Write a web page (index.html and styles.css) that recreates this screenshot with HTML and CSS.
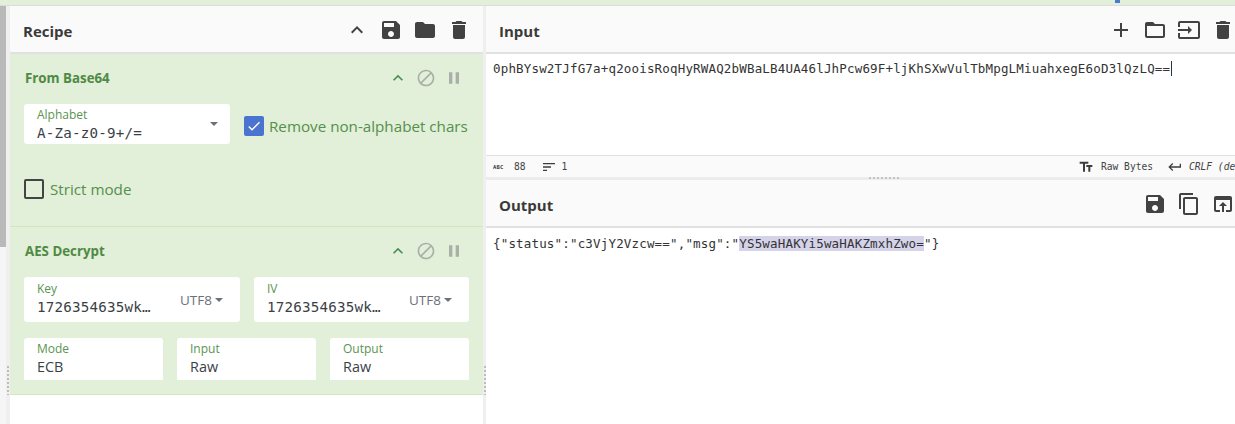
FILE: index.html
```html
<!DOCTYPE html>
<html lang="en">
<head>
<meta charset="utf-8">
<title>CyberChef</title>
<link rel="stylesheet" href="styles.css">
</head>
<body>
<div class="topstrip"><span class="topmark"></span></div>
<div class="workspace">
  <div class="rail"><div class="thumb"></div></div>
  <div class="gutter gutter-left"><span class="dots"></span></div>
  <section class="recipe">
    <header class="head">
      <h2>Recipe</h2>
      <div class="tools">
        <svg class="ic" viewBox="0 0 24 24"><path d="M12 8l-6 6 1.41 1.41L12 10.83l4.59 4.58L18 14z"/></svg>
        <svg class="ic" viewBox="0 0 24 24"><path d="M17 3H5c-1.11 0-2 .9-2 2v14c0 1.1.89 2 2 2h14c1.1 0 2-.9 2-2V7l-4-4zm-5 16c-1.66 0-3-1.34-3-3s1.34-3 3-3 3 1.34 3 3-1.34 3-3 3zm3-10H5V5h10v4z"/></svg>
        <svg class="ic" viewBox="0 0 24 24"><path d="M10 4H4c-1.1 0-1.99.9-1.99 2L2 18c0 1.1.9 2 2 2h16c1.1 0 2-.9 2-2V8c0-1.1-.9-2-2-2h-8l-2-2z"/></svg>
        <svg class="ic" viewBox="0 0 24 24"><path d="M6 19c0 1.1.9 2 2 2h8c1.1 0 2-.9 2-2V7H6v12zM19 4h-3.5l-1-1h-5l-1 1H5v2h14V4z"/></svg>
      </div>
    </header>

    <article class="op op-base">
      <div class="op-head">
        <h3>From Base64</h3>
        <div class="op-tools">
          <svg class="oc oc-up" viewBox="0 0 24 24"><path d="M12 8l-6 6 1.41 1.41L12 10.83l4.59 4.58L18 14z"/></svg>
          <svg class="oc" viewBox="0 0 24 24"><path d="M12 2C6.48 2 2 6.48 2 12s4.48 10 10 10 10-4.48 10-10S17.52 2 12 2zM4 12c0-4.42 3.58-8 8-8 1.85 0 3.55.63 4.9 1.69L5.69 16.9C4.63 15.55 4 13.85 4 12zm8 8c-1.85 0-3.55-.63-4.9-1.69L18.31 7.1C19.37 8.45 20 10.15 20 12c0 4.42-3.58 8-8 8z"/></svg>
          <svg class="oc" viewBox="0 0 24 24"><path d="M6 19h4V5H6v14zm8-14v14h4V5h-4z"/></svg>
        </div>
      </div>
      <div class="row row-alpha">
        <div class="field field-alpha">
          <label>Alphabet</label>
          <div class="val mono">A-Za-z0-9+/=</div>
          <span class="caret caret-alpha"></span>
        </div>
        <div class="check check-remove">
          <span class="box on"><svg viewBox="0 0 24 24"><path d="M9 16.17L4.83 12l-1.42 1.41L9 19 21 7l-1.41-1.41z"/></svg></span>
          <span class="check-label">Remove non-alphabet chars</span>
        </div>
      </div>
      <div class="check check-strict">
        <span class="box"></span>
        <span class="check-label">Strict mode</span>
      </div>
    </article>

    <article class="op op-aes">
      <div class="op-head">
        <h3>AES Decrypt</h3>
        <div class="op-tools">
          <svg class="oc oc-up" viewBox="0 0 24 24"><path d="M12 8l-6 6 1.41 1.41L12 10.83l4.59 4.58L18 14z"/></svg>
          <svg class="oc" viewBox="0 0 24 24"><path d="M12 2C6.48 2 2 6.48 2 12s4.48 10 10 10 10-4.48 10-10S17.52 2 12 2zM4 12c0-4.42 3.58-8 8-8 1.85 0 3.55.63 4.9 1.69L5.69 16.9C4.63 15.55 4 13.85 4 12zm8 8c-1.85 0-3.55-.63-4.9-1.69L18.31 7.1C19.37 8.45 20 10.15 20 12c0 4.42-3.58 8-8 8z"/></svg>
          <svg class="oc" viewBox="0 0 24 24"><path d="M6 19h4V5H6v14zm8-14v14h4V5h-4z"/></svg>
        </div>
      </div>
      <div class="row row-two">
        <div class="field field-key">
          <div class="key-main"><label>Key</label><div class="val mono">1726354635wk…</div></div>
          <span class="enc">UTF8<span class="caret"></span></span>
        </div>
        <div class="field field-key">
          <div class="key-main"><label>IV</label><div class="val mono">1726354635wk…</div></div>
          <span class="enc">UTF8<span class="caret"></span></span>
        </div>
      </div>
      <div class="row row-three">
        <div class="field field-small"><label>Mode</label><div class="val">ECB</div></div>
        <div class="field field-small"><label>Input</label><div class="val">Raw</div></div>
        <div class="field field-small"><label>Output</label><div class="val">Raw</div></div>
      </div>
    </article>
    <div class="recipe-rest"></div>
  </section>

  <div class="gutter gutter-mid"><span class="dots"></span></div>

  <section class="io">
    <header class="head head-io">
      <h2>Input</h2>
      <div class="tools">
        <svg class="ic" viewBox="0 0 24 24"><path d="M19 13h-6v6h-2v-6H5v-2h6V5h2v6h6v2z"/></svg>
        <svg class="ic" viewBox="0 0 24 24"><path d="M20 6h-8l-2-2H4c-1.1 0-1.99.9-1.99 2L2 18c0 1.1.9 2 2 2h16c1.1 0 2-.9 2-2V8c0-1.1-.9-2-2-2zm0 12H4V8h16v10z"/></svg>
        <svg class="ic" viewBox="0 0 24 24"><path d="M21 3.01H3c-1.1 0-2 .9-2 2V9h2V4.99h18v14.03H3V15H1v4.01c0 1.1.9 1.98 2 1.98h18c1.1 0 2-.88 2-1.98v-14c0-1.11-.9-2-2-2zM11 16l4-4-4-4v3H1v2h10v3z"/></svg>
        <svg class="ic" viewBox="0 0 24 24"><path d="M6 19c0 1.1.9 2 2 2h8c1.1 0 2-.9 2-2V7H6v12zM19 4h-3.5l-1-1h-5l-1 1H5v2h14V4z"/></svg>
      </div>
    </header>
    <div class="text text-input mono"><span class="cursor">0phBYsw2TJfG7a+q2ooisRoqHyRWAQ2bWBaLB4UA46lJhPcw69F+ljKhSXwVulTbMpgLMiuahxegE6oD3lQzLQ==</span></div>
    <div class="status mono">
      <span class="abc">ABC</span><span class="st st-len">88</span>
      <svg class="sc" viewBox="0 0 24 24"><path d="M3 18h6v-2H3v2zM3 6v2h18V6H3zm0 7h12v-2H3v2z"/></svg><span class="st">1</span>
      <span class="status-right">
        <svg class="sc" viewBox="0 0 24 24"><path d="M2.5 4v3h5v12h3V7h5V4h-13zm19 5h-9v3h3v7h3v-7h3V9z"/></svg><span class="st st-raw">Raw Bytes</span>
        <svg class="sc sc-ret" viewBox="0 0 24 24"><path d="M19 7v4H5.83l3.58-3.59L8 6l-6 6 6 6 1.41-1.41L5.83 13H21V7z"/></svg><em class="st">CRLF (detected)</em>
      </span>
    </div>
    <div class="split"><span class="split-dots"></span></div>
    <header class="head head-io head-out">
      <h2>Output</h2>
      <div class="tools">
        <svg class="ic" viewBox="0 0 24 24"><path d="M17 3H5c-1.11 0-2 .9-2 2v14c0 1.1.89 2 2 2h14c1.1 0 2-.9 2-2V7l-4-4zm-5 16c-1.66 0-3-1.34-3-3s1.34-3 3-3 3 1.34 3 3-1.34 3-3 3zm3-10H5V5h10v4z"/></svg>
        <svg class="ic" viewBox="0 0 24 24"><path d="M16 1H4c-1.1 0-2 .9-2 2v14h2V3h12V1zm3 4H8c-1.1 0-2 .9-2 2v14c0 1.1.9 2 2 2h11c1.1 0 2-.9 2-2V7c0-1.1-.9-2-2-2zm0 16H8V7h11v14z"/></svg>
        <svg class="ic" viewBox="0 0 24 24"><path d="M19 4H5c-1.11 0-2 .9-2 2v12c0 1.1.89 2 2 2h4v-2H5V8h14v10h-4v2h4c1.1 0 2-.9 2-2V6c0-1.1-.89-2-2-2zm-7 6l-4 4h3v6h2v-6h3l-4-4z"/></svg>
      </div>
    </header>
    <div class="text text-output mono">{"status":"c3VjY2Vzcw==","msg":"<mark>YS5waHAKYi5waHAKZmxhZwo=</mark>"}</div>
  </section>
</div>
</body>
</html>
```
FILE: styles.css
```css
* { box-sizing: border-box; }
html, body { margin: 0; height: 424px; overflow: hidden; background: #fff; }
body { font-family: "Open Sans", "Noto Sans", sans-serif; color: #3d3d3d; display: flex; flex-direction: column; }
h2, h3 { margin: 0; }
.mono { font-family: "DejaVu Sans Mono", monospace; }

.topstrip { height: 5px; flex: none; background: #e2efd9; position: relative; }
.topmark { position: absolute; left: 1115px; top: 0; width: 5px; height: 3px; background: #4a7ad0; }

.workspace { flex: 1; display: flex; min-height: 0; border-top: 1px solid #dcdcdc; }
.rail { width: 6px; flex: none; background: #f5f5f5; }
.thumb { height: 241px; background: #b9b9b9; }
.gutter { flex: none; background: #efefef; display: flex; flex-direction: column; justify-content: flex-end; align-items: center; padding-bottom: 29px; }
.gutter-left { width: 4px; }
.gutter-mid { width: 3px; }
.dots { width: 2px; height: 29px; background: repeating-linear-gradient(to bottom, #bdbdbd 0 2px, transparent 2px 4px); }

.recipe { width: 473px; flex: none; display: flex; flex-direction: column; background: #fff; }
.io { flex: 1; min-width: 0; display: flex; flex-direction: column; background: #fff; }

.head { height: 48px; flex: none; display: flex; align-items: center; justify-content: space-between; background: #fafafa; border-bottom: 2px solid #e1e1e1; padding: 0 12px 0 13px; }
.head h2 { font-size: 15px; font-weight: 700; color: #3a3a3a; line-height: 20px; padding-top: 4px; }
.head-io { padding: 0 0 0 13px; }
.tools { display: flex; gap: 10px; padding-top: 2px; }
.ic { width: 24px; height: 24px; fill: #424242; display: block; }

.op { background: #e2efd9; border-bottom: 1px solid #d3e6c0; padding: 0 14px; flex: none; color: #4d8a45; }
.op-base { height: 173px; }
.op-aes { height: 168px; }
.recipe-rest { flex: 1; }
.op-head { display: flex; justify-content: space-between; align-items: center; height: 47px; padding-left: 1px; }
.op-head h3 { font-size: 13.3px; font-weight: 700; color: #4f8a45; line-height: 18px; }
.op-tools { display: flex; gap: 8px; margin-right: 5px; }
.oc { width: 20px; height: 20px; fill: #a9b0a8; display: block; }
.oc-up { fill: #4a8a55; }

.row { display: flex; }
.row-alpha { margin-top: 3px; align-items: center; gap: 14px; }
.row-two { margin-top: 3px; gap: 14px; }
.row-three { margin-top: 16px; gap: 14px; }

.field { background: #fff; border-radius: 3px; position: relative; padding-left: 13px; }
.field label { display: block; font-size: 12px; line-height: 14px; color: #5a9450; }
.val { font-size: 14.4px; line-height: 18px; color: #3a3f46; }
.val.mono { font-size: 14.2px; letter-spacing: .2px; white-space: nowrap; }
.field-alpha { width: 206px; height: 40px; padding-top: 4px; }
.field-alpha .val { margin-top: 2px; }
.field-key { width: 216px; height: 45px; padding-top: 5px; display: flex; justify-content: space-between; padding-right: 17px; }
.field-key + .field-key { width: 215px; }
.field-key .val { margin-top: 2px; }
.field-small { width: 139px; height: 42px; padding-top: 4px; border-radius: 3px 3px 0 0; }
.field-small .val { margin-top: 2px; }
.enc { font-size: 13.5px; color: #6b7079; font-weight: 500; align-self: center; display: flex; align-items: center; gap: 3px; margin-top: -4px; }
.caret { width: 0; height: 0; border-left: 4px solid transparent; border-right: 4px solid transparent; border-top: 4px solid #6b7079; }
.caret-alpha { position: absolute; right: 12px; top: 18px; }

.check { display: flex; align-items: center; gap: 5px; font-size: 15.2px; color: #55904c; line-height: 20px; }
.check-remove { margin-top: 4px; }
.check-strict { margin-top: 35px; }
.check-strict .check-label { margin-left: 1px; }
.box { width: 20px; height: 20px; border: 2px solid #444; border-radius: 2px; display: block; flex: none; }
.box.on { background: #4a74cf; border: 0; padding: 2px; }
.box.on svg { width: 16px; height: 16px; fill: #fff; display: block; }

.text { font-size: 12.5px; letter-spacing: .17px; padding-left: 7px; color: #333; white-space: pre; }
.text-input { height: 101px; padding-top: 7px; line-height: 15px; }
.cursor { border-right: 1px solid #333; padding-right: 1px; }
.text-output { flex: 1; padding-top: 8px; line-height: 15px; }
mark { background: #d5d3ea; color: inherit; }

.status { height: 22px; flex: none; display: flex; align-items: center; background: #fafafa; border-top: 1px solid #e1e1e1; padding-left: 7px; font-size: 9.6px; color: #444; white-space: nowrap; overflow: hidden; }
.abc { font-size: 5.5px; font-weight: 700; letter-spacing: .2px; width: 13px; }
.st { font-size: 9.6px; }
.st-len { margin: 0 15px 0 8px; }
.sc { width: 16px; height: 16px; fill: #3d3d3d; flex: none; margin-right: 5px; }
.status-right { margin-left: auto; width: 157px; display: flex; align-items: center; overflow: hidden; flex: none; }
.st-raw { margin-right: 14px; margin-left: 2px; }
.status-right em { margin-left: 1px; }

.split { height: 3px; flex: none; background: #ececec; display: flex; justify-content: flex-start; padding-left: 383px; }
.split-dots { width: 30px; height: 2px; background: repeating-linear-gradient(to right, #c4c4c4 0 2px, transparent 2px 4px); }
```
